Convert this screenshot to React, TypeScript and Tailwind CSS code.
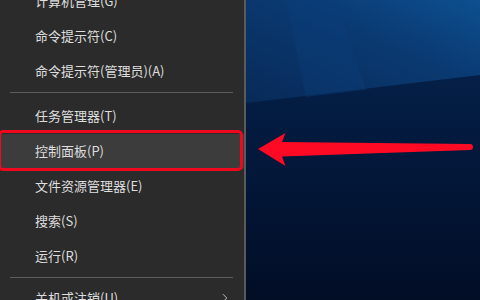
import { ChevronRight } from 'lucide-react';

type Entry = { label: string; active?: boolean; sub?: boolean } | { sep: number };

const entries: Entry[] = [
  { label: '计算机管理(G)' },
  { label: '命令提示符(C)' },
  { label: '命令提示符(管理员)(A)' },
  { sep: 6 },
  { label: '任务管理器(T)' },
  { label: '控制面板(P)', active: true },
  { label: '文件资源管理器(E)' },
  { label: '搜索(S)' },
  { label: '运行(R)' },
  { sep: 3 },
  { label: '关机或注销(U)', sub: true },
];

export default function App() {
  return (
    <div
      className="flex h-[300px] w-[480px] overflow-hidden bg-[#2b2b2b]"
      style={{ fontFamily: '"Noto Sans CJK SC", "Noto Sans", sans-serif' }}
    >
      {/* start-button context menu */}
      <div className="relative w-[246px] shrink-0 border-r-2 border-[#5a5a5a] bg-[#2b2b2b]">
        <div className="-mt-[16.5px] flex flex-col">
          {entries.map((e, i) =>
            'sep' in e ? (
              <div key={i} className="pt-[3px]" style={{ paddingBottom: e.sep }}>
                <div className="ml-[10px] h-px w-[223px] bg-[#5c5c5c]" />
              </div>
            ) : (
              <div
                key={i}
                className={`flex h-[35px] shrink-0 items-center justify-between pl-[35px] pr-[12px] text-[13px] text-[#dedede] ${
                  e.active ? 'bg-[#3c3c3c]' : ''
                }`}
              >
                <span>{e.label}</span>
                {e.sub && <ChevronRight size={14} strokeWidth={1.5} className="text-[#cfcfcf]" />}
              </div>
            ),
          )}
        </div>
        {/* red annotation box */}
        <div className="absolute left-[-2px] top-[130px] h-[41px] w-[245px] rounded-[5px] border-[3px] border-[#f0081f]" />
      </div>

      {/* desktop wallpaper */}
      <div className="relative flex-1">
        <svg className="h-full w-full" viewBox="0 0 234 300" preserveAspectRatio="none">
          <defs>
            <linearGradient id="low" x1="0" y1="0" x2="0" y2="1">
              <stop offset="0" stopColor="#072654" />
              <stop offset="0.45" stopColor="#031a3e" />
              <stop offset="1" stopColor="#020d26" />
            </linearGradient>
            <linearGradient id="high" x1="0" y1="1" x2="1" y2="0">
              <stop offset="0" stopColor="#082a58" />
              <stop offset="0.6" stopColor="#0a3a72" />
              <stop offset="1" stopColor="#0d4f90" />
            </linearGradient>
          </defs>
          <rect x="0" y="0" width="234" height="300" fill="url(#low)" />
          <polygon points="0,0 234,0 234,75 0,103" fill="url(#high)" />
          <polygon points="40,0 90,0 120,90 60,97" fill="#0c3f7a" opacity="0.35" />
        </svg>
        {/* red arrow */}
        <svg className="absolute left-0 top-0" width="234" height="300" viewBox="246 0 234 300">
          <path
            d="M258 149 L285.5 133 L282 142 L470 144 Q473 144 473 147 Q473 150 470 150 L282 156.5 L285.5 166 Z"
            fill="#ff0a24"
          />
        </svg>
      </div>
    </div>
  );
}
